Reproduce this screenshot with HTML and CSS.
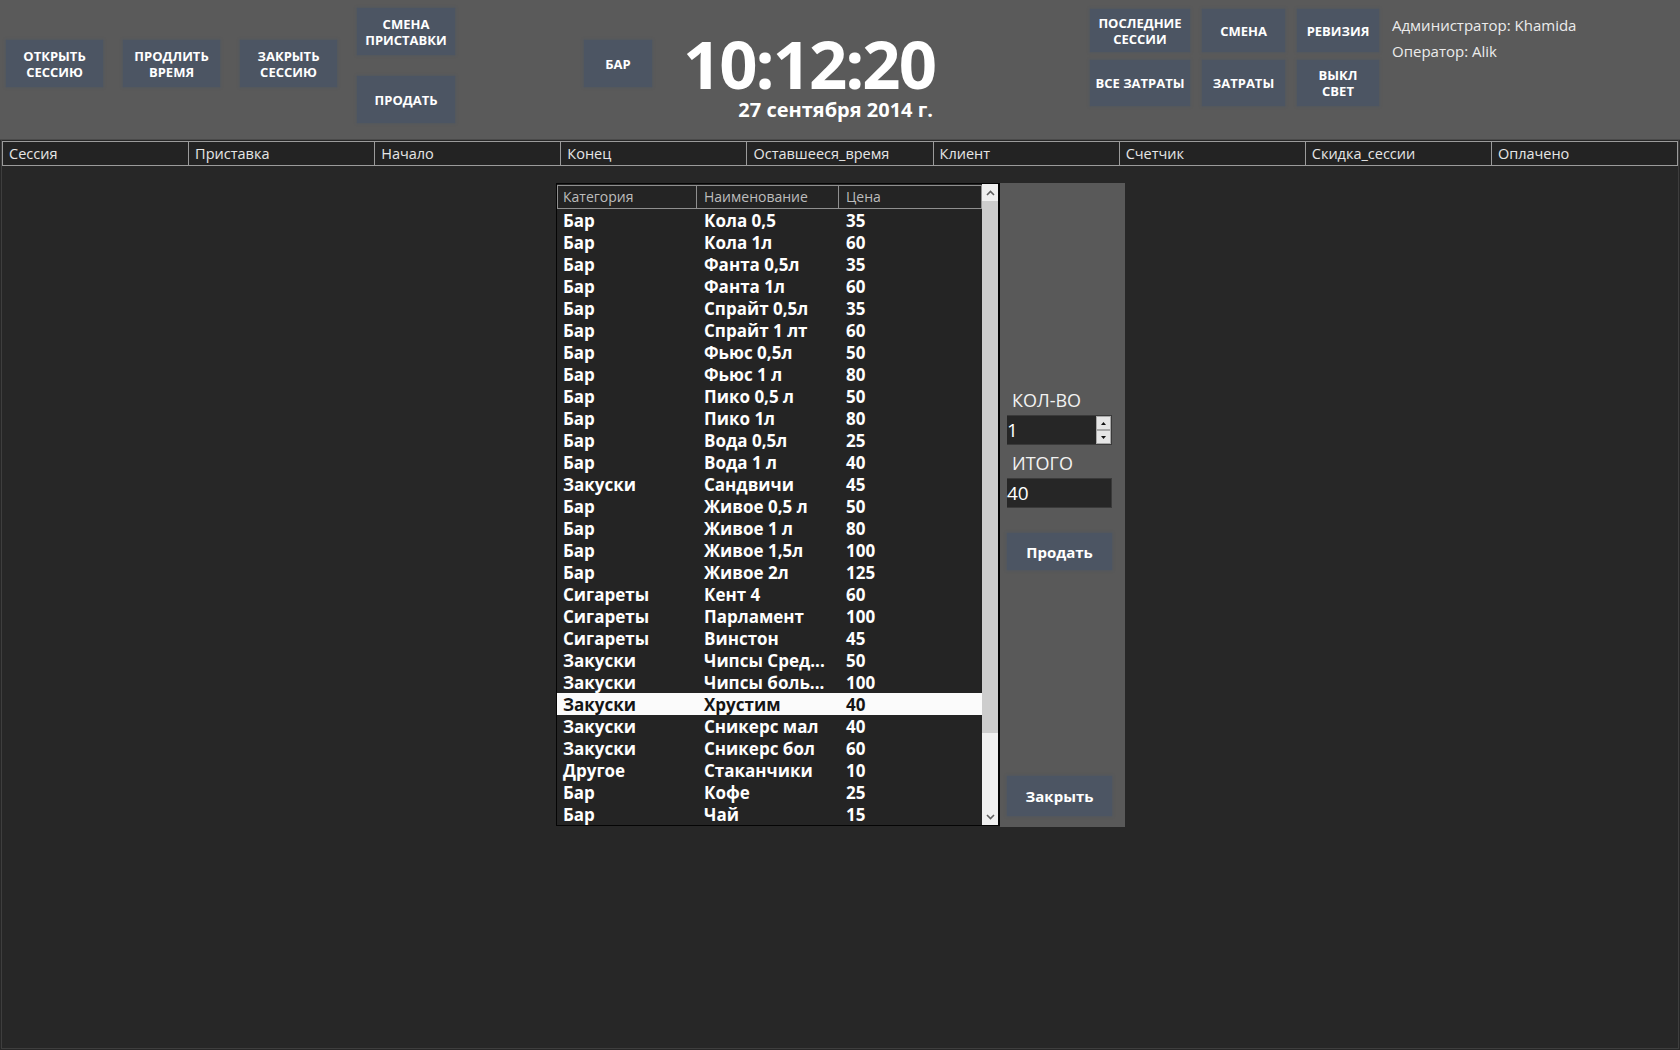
FILE: index.html
```html
<!DOCTYPE html>
<html lang="ru">
<head>
<meta charset="utf-8">
<title>Клуб</title>
<link rel="stylesheet" href="styles.css">
</head>
<body>
<div class="topbar">
  <div class="group-main">
    <div class="btn">ОТКРЫТЬ<br>СЕССИЮ</div>
    <div class="btn">ПРОДЛИТЬ<br>ВРЕМЯ</div>
    <div class="btn">ЗАКРЫТЬ<br>СЕССИЮ</div>
  </div>
  <div class="stack">
    <div class="btn">СМЕНА<br>ПРИСТАВКИ</div>
    <div class="btn">ПРОДАТЬ</div>
  </div>
  <div class="btn btn-bar">БАР</div>
  <div class="clock">
    <div class="clock-time">10:12:20</div>
    <div class="clock-date">27 сентября 2014 г.</div>
  </div>
  <div class="right-grid">
    <div class="btn">ПОСЛЕДНИЕ<br>СЕССИИ</div>
    <div class="btn">СМЕНА</div>
    <div class="btn">РЕВИЗИЯ</div>
    <div class="btn">ВСЕ ЗАТРАТЫ</div>
    <div class="btn">ЗАТРАТЫ</div>
    <div class="btn">ВЫКЛ<br>СВЕТ</div>
  </div>
  <div class="admin">
    <div>Администратор: Khamida</div>
    <div>Оператор: Alik</div>
  </div>
</div>

<div class="grid">
  <div class="grid-header">
    <div class="gh-cell">Сессия</div>
    <div class="gh-cell">Приставка</div>
    <div class="gh-cell">Начало</div>
    <div class="gh-cell">Конец</div>
    <div class="gh-cell">Оставшееся_время</div>
    <div class="gh-cell">Клиент</div>
    <div class="gh-cell">Счетчик</div>
    <div class="gh-cell">Скидка_сессии</div>
    <div class="gh-cell">Оплачено</div>
  </div>
</div>

<div class="dialog">
  <div class="listbox">
    <div class="list-main">
      <div class="list-head">
        <div class="lh-cell">Категория</div>
        <div class="lh-cell">Наименование</div>
        <div class="lh-cell">Цена</div>
      </div>
      <div class="row"><span>Бар</span><span>Кола 0,5</span><span>35</span></div>
      <div class="row"><span>Бар</span><span>Кола 1л</span><span>60</span></div>
      <div class="row"><span>Бар</span><span>Фанта 0,5л</span><span>35</span></div>
      <div class="row"><span>Бар</span><span>Фанта 1л</span><span>60</span></div>
      <div class="row"><span>Бар</span><span>Спрайт 0,5л</span><span>35</span></div>
      <div class="row"><span>Бар</span><span>Спрайт 1 лт</span><span>60</span></div>
      <div class="row"><span>Бар</span><span>Фьюс 0,5л</span><span>50</span></div>
      <div class="row"><span>Бар</span><span>Фьюс 1 л</span><span>80</span></div>
      <div class="row"><span>Бар</span><span>Пико 0,5 л</span><span>50</span></div>
      <div class="row"><span>Бар</span><span>Пико 1л</span><span>80</span></div>
      <div class="row"><span>Бар</span><span>Вода 0,5л</span><span>25</span></div>
      <div class="row"><span>Бар</span><span>Вода 1 л</span><span>40</span></div>
      <div class="row"><span>Закуски</span><span>Сандвичи</span><span>45</span></div>
      <div class="row"><span>Бар</span><span>Живое 0,5 л</span><span>50</span></div>
      <div class="row"><span>Бар</span><span>Живое 1 л</span><span>80</span></div>
      <div class="row"><span>Бар</span><span>Живое 1,5л</span><span>100</span></div>
      <div class="row"><span>Бар</span><span>Живое 2л</span><span>125</span></div>
      <div class="row"><span>Сигареты</span><span>Кент 4</span><span>60</span></div>
      <div class="row"><span>Сигареты</span><span>Парламент</span><span>100</span></div>
      <div class="row"><span>Сигареты</span><span>Винстон</span><span>45</span></div>
      <div class="row"><span>Закуски</span><span>Чипсы Сред...</span><span>50</span></div>
      <div class="row"><span>Закуски</span><span>Чипсы боль...</span><span>100</span></div>
      <div class="row selected"><span>Закуски</span><span>Хрустим</span><span>40</span></div>
      <div class="row"><span>Закуски</span><span>Сникерс мал</span><span>40</span></div>
      <div class="row"><span>Закуски</span><span>Сникерс бол</span><span>60</span></div>
      <div class="row"><span>Другое</span><span>Стаканчики</span><span>10</span></div>
      <div class="row"><span>Бар</span><span>Кофе</span><span>25</span></div>
      <div class="row"><span>Бар</span><span>Чай</span><span>15</span></div>
    </div>
    <div class="scroll">
      <div class="sb-arrow"><svg width="9" height="6" viewBox="0 0 9 6"><path d="M1 5 L4.5 1.5 L8 5" fill="none" stroke="#606060" stroke-width="1.6"/></svg></div>
      <div class="sb-thumb"></div>
      <div class="sb-track"></div>
      <div class="sb-arrow"><svg width="9" height="6" viewBox="0 0 9 6"><path d="M1 1 L4.5 4.5 L8 1" fill="none" stroke="#606060" stroke-width="1.6"/></svg></div>
    </div>
  </div>
  <div class="side">
    <div class="lbl">КОЛ-ВО</div>
    <div class="field num">
      <span class="field-text">1</span>
      <div class="spin">
        <div class="spin-btn"><svg width="5" height="3" viewBox="0 0 5 3"><path d="M0 3 L2.5 0 L5 3 Z" fill="#111"/></svg></div>
        <div class="spin-btn"><svg width="5" height="3" viewBox="0 0 5 3"><path d="M0 0 L2.5 3 L5 0 Z" fill="#111"/></svg></div>
      </div>
    </div>
    <div class="lbl lbl-2">ИТОГО</div>
    <div class="field total"><span class="field-text">40</span></div>
    <div class="pbtn sell">Продать</div>
    <div class="pbtn close">Закрыть</div>
  </div>
</div>
</body>
</html>
```

FILE: styles.css
```css
* { box-sizing: border-box; }
html, body { margin: 0; padding: 0; }
body {
  width: 1680px;
  height: 1050px;
  background: #272727;
  font-family: "Open Sans", "Noto Sans", "DejaVu Sans", sans-serif;
  color: #fff;
  overflow: hidden;
  display: flex;
  flex-direction: column;
  position: relative;
}

/* ---------- top bar ---------- */
.topbar {
  height: 140px;
  flex: none;
  background: #5a5a5a;
  border-bottom: 1px solid #4a4a4a;
  display: flex;
  align-items: flex-start;
}
.btn {
  background: #4c5563;
  color: #fff;
  font-weight: 700;
  font-size: 13px;
  line-height: 16px;
  text-align: center;
  display: flex;
  align-items: center;
  justify-content: center;
  box-shadow: 0 0 2px 1px rgba(76, 85, 99, 0.55);
}
.group-main {
  display: flex;
  gap: 20px;
  margin: 40px 0 0 6px;
}
.group-main .btn { width: 97px; height: 47px; }
.stack {
  display: flex;
  flex-direction: column;
  gap: 21px;
  margin: 8px 0 0 20px;
}
.stack .btn { width: 98px; height: 47px; }
.btn-bar {
  width: 68px;
  height: 47px;
  margin: 40px 0 0 129px;
}
.clock {
  width: 283px;
  margin-top: 33px;
  text-align: right;
}
.clock-time {
  font-size: 67px;
  font-weight: 700;
  line-height: 60px;
  letter-spacing: -2px;
}
.clock-date {
  font-size: 20px;
  font-weight: 700;
  line-height: 24px;
  margin-top: 5px;
  padding-right: 2px;
}
.right-grid {
  display: grid;
  grid-template-columns: 100px 83px 82px;
  grid-template-rows: 43px 46px;
  column-gap: 12px;
  row-gap: 8px;
  margin: 9px 0 0 155px;
}
.admin {
  margin: 12px 0 0 13px;
  font-size: 15px;
  line-height: 26px;
  color: #ececec;
}

/* ---------- sessions grid ---------- */
.grid {
  flex: 1;
  margin: 0 1px 1px 1px;
  border: 1px solid #3e3e3e;
  border-top: none;
  padding-top: 1px;
}
.grid-header {
  display: flex;
  height: 25px;
  border: 1px solid #9b9b9b;
  background: #232323;
}
.gh-cell {
  flex: 1;
  border-right: 1px solid #9b9b9b;
  padding: 1px 0 0 6px;
  font-size: 14.5px;
  line-height: 22px;
  color: #e6e6e6;
  white-space: nowrap;
}
.gh-cell:last-child { border-right: none; }

/* ---------- bar dialog ---------- */
.dialog {
  position: absolute;
  left: 556px;
  top: 183px;
  display: flex;
  align-items: flex-start;
}
.listbox {
  width: 444px;
  height: 643px;
  border: 1px solid #050505;
  border-right-width: 2px;
  background: #242424;
  display: flex;
}
.list-main {
  width: 425px;
  overflow: hidden;
  padding-top: 1px;
}
.list-head {
  display: grid;
  grid-template-columns: 140px 142px 143px;
  height: 24px;
  border-top: 1px solid #8f8f8f;
  border-bottom: 1px solid #8f8f8f;
}
.lh-cell {
  border-right: 1px solid #8f8f8f;
  font-size: 14px;
  line-height: 22px;
  color: #bdbdbd;
  padding-left: 7px;
  white-space: nowrap;
}
.lh-cell:first-child { border-left: 1px solid #8f8f8f; padding-left: 5px; }
.row {
  display: grid;
  grid-template-columns: 140px 142px 143px;
  height: 22px;
  padding-top: 1px;
  font-size: 17px;
  font-weight: 700;
  line-height: 22px;
  color: #fff;
}
.row span {
  padding-left: 7px;
  white-space: nowrap;
}
.row span:first-child { padding-left: 6px; }
.row.selected { background: #fbfbfb; color: #151515; }

.scroll {
  width: 16px;
  background: #f0f0f0;
  display: flex;
  flex-direction: column;
}
.sb-arrow {
  height: 17px;
  flex: none;
  display: flex;
  align-items: center;
  justify-content: center;
}
.sb-thumb {
  height: 532px;
  flex: none;
  background: #cdcdcd;
}
.sb-track { flex: 1; }

.side {
  width: 125px;
  height: 644px;
  background: #595959;
  display: flex;
  flex-direction: column;
  padding: 206px 13px 11px 7px;
}
.lbl {
  font-size: 18px;
  line-height: 22px;
  margin-left: 5px;
  color: #f2f2f2;
}
.lbl-2 { margin-top: 7px; }
.field {
  width: 105px;
  height: 30px;
  background: #262626;
  border: 1px solid #3a3a3a;
  border-left: none;
  display: flex;
  align-items: center;
  font-size: 19px;
  color: #fff;
}
.field-text { flex: 1; padding-left: 0; }
.num { margin-top: 4px; }
.total { margin-top: 4px; }
.spin {
  width: 15px;
  height: 28px;
  display: flex;
  flex-direction: column;
}
.spin-btn {
  flex: 1;
  background: #e6e6e6;
  border: 1px solid #a8a8a8;
  display: flex;
  align-items: center;
  justify-content: center;
}
.pbtn {
  width: 105px;
  background: #4c5563;
  color: #fff;
  font-weight: 700;
  font-size: 15px;
  display: flex;
  align-items: center;
  justify-content: center;
  box-shadow: 0 0 2px 1px rgba(76, 85, 99, 0.5);
}
.sell { height: 37px; margin-top: 25px; }
.close { height: 40px; margin-top: auto; }
```
